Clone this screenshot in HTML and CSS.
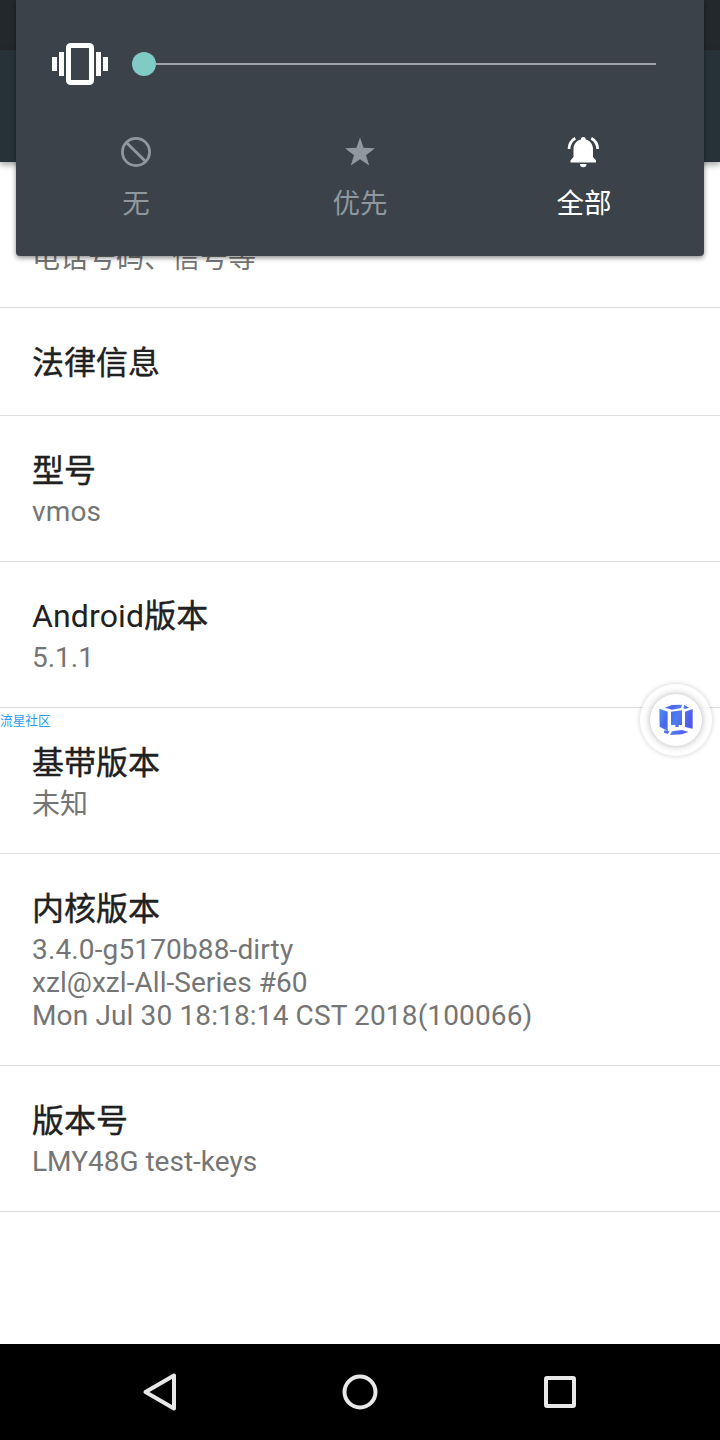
FILE: index.html
```
<!DOCTYPE html>
<html lang="zh-CN">
<head>
<meta charset="utf-8">
<title>关于手机</title>
<link rel="stylesheet" href="styles.css">
</head>
<body>
<div class="screen">
  <div class="status-bar"></div>
  <header class="app-bar"></header>
  <main class="list">
    <section class="item item-clipped"><p class="summary">电话号码、信号等</p></section>
    <section class="item item-single"><h2 class="title title-cjk">法律信息</h2></section>
    <section class="item"><h2 class="title title-cjk">型号</h2><p class="summary summary-wide">vmos</p></section>
    <section class="item"><h2 class="title"><span class="latin">Android</span>版本</h2><p class="summary">5.1.1</p></section>
    <section class="item"><h2 class="title title-cjk">基带版本</h2><p class="summary summary-cjk">未知</p></section>
    <section class="item"><h2 class="title title-cjk">内核版本</h2><p class="summary summary-wide">3.4.0-g5170b88-dirty<br><span class="tight">xzl@xzl-All-Series #60</span><br>Mon Jul 30 18:18:14 CST 2018(100066)</p></section>
    <section class="item"><h2 class="title title-cjk">版本号</h2><p class="summary">LMY48G test-keys</p></section>
  </main>
  <nav class="nav-bar">
    <svg class="nav-icon" viewBox="0 0 48 48"><path d="M9.5 24 38 7.5v33z"/></svg>
    <svg class="nav-icon" viewBox="0 0 48 48"><circle cx="24" cy="24" r="15.5"/></svg>
    <svg class="nav-icon" viewBox="0 0 48 48"><rect x="10" y="10" width="28" height="28" rx="1"/></svg>
  </nav>

  <div class="volume-panel">
    <div class="volume-row">
      <svg class="vibrate" viewBox="0 0 56 42"><path d="M0 14h5v14H0zM7 9h5v24H7zM44 9h5v24h-5zM51 14h5v14h-5z" fill="#fff"/><rect x="16.5" y="2.5" width="23" height="37" rx="2" fill="none" stroke="#fff" stroke-width="5"/></svg>
      <div class="slider"><span class="thumb"></span><span class="track"></span></div>
    </div>
    <div class="modes">
      <div class="mode">
        <svg class="mode-icon" viewBox="0 0 36 36" fill="none" stroke="currentColor" stroke-width="2.8"><circle cx="18" cy="18" r="13.6"/><path d="M8.4 8.4 27.6 27.6"/></svg>
        <span>无</span>
      </div>
      <div class="mode">
        <svg class="mode-icon" viewBox="0 0 36 36" fill="currentColor"><path d="m18 3.5 3.600 10.300L33 14.200l-9 7 3.200 10.300L18 25.200l-9.200 6.300L12 21.200l-9-7 11.400-.4z"/></svg>
        <span>优先</span>
      </div>
      <div class="mode mode-active">
        <svg class="mode-icon" viewBox="0 0 36 36" fill="currentColor"><path d="M17.300 3a2.400 2.400 0 0 1 2.400 2.500c4.500 1.100 7.300 4.800 7.300 9.500v8l3 3.500v2H4.500v-2l3-3.500v-8c0-4.700 2.900-8.400 7.400-9.500A2.400 2.400 0 0 1 17.300 3zM14 30h6.500a3.250 3.250 0 0 1-6.500 0z"/><path d="M9.300 4.300C5.300 6.500 3.200 10 3 15M25.300 4.300C29.300 6.500 31.500 10 31.700 15" fill="none" stroke="currentColor" stroke-width="2.700"/></svg>
        <span>全部</span>
      </div>
    </div>
  </div>

  <div class="watermark">流星社区</div>
  <div class="float-ball">
    <div class="float-core">
      <svg class="float-logo" viewBox="21 24 102 96">
        <defs><linearGradient id="blue" gradientUnits="userSpaceOnUse" x1="22" y1="50" x2="122" y2="90"><stop stop-color="#4a8df2"/><stop offset=".25" stop-color="#4a68ee"/><stop offset=".5" stop-color="#4f7cf0"/><stop offset="1" stop-color="#5154e8"/></linearGradient></defs>
        <g fill="url(#blue)"><path d="M38 35 60 27 90 26 87 36 60 41zM97 27 111 35 98 39 94 37zM22 38 47 47V105L23 92zM122 39 99 47V93L122 98zM57 47 90 43V87H80V93H70V87H57zM37 103 52 106 48 114 36 110z"/><path d="M60 106 90 102 109 108 90 115 54 117z"/></g>
      </svg>
    </div>
  </div>
</div>
</body>
</html>
```
FILE: styles.css
```
* { box-sizing: border-box; }
body { margin: 0; background: #fff; }
.screen {
  position: relative;
  display: flex;
  flex-direction: column;
  width: 720px;
  height: 1440px;
  overflow: hidden;
  font-family: Roboto, "Noto Sans CJK SC", sans-serif;
}
.status-bar { flex: none; height: 50px; background: #22282c; }
.app-bar {
  flex: none;
  height: 112px;
  background: #263238;
  box-shadow: 0 3px 6px rgba(0, 0, 0, .35);
}
.list { flex: 1; }
.item { padding: 35px 32px 33px; border-bottom: 1px solid #dedede; }
.item-clipped { padding: 80px 32px 32px; }
.item-single { padding-bottom: 34px; }
.title {
  margin: 0;
  height: 38px;
  font-size: 32px;
  line-height: 38px;
  font-weight: 400;
  color: #212121;
  -webkit-text-stroke: .4px #212121;
}
.title-cjk { line-height: 40px; }
.latin { letter-spacing: .15px; -webkit-text-stroke: 0; }
.summary {
  margin: 0;
  font-size: 28px;
  line-height: 33px;
  color: #757575;
}
.summary-wide { letter-spacing: .14px; }
.summary-cjk { height: 33px; line-height: 35px; }
.tight { letter-spacing: .05px; }
.title + .summary { margin-top: 6px; }

.nav-bar {
  flex: none;
  display: flex;
  justify-content: center;
  align-items: center;
  gap: 152px;
  height: 96px;
  background: #000;
}
.nav-icon {
  width: 48px;
  height: 48px;
  fill: none;
  stroke: #e8e8e8;
  stroke-width: 4;
  stroke-linejoin: round;
}

.volume-panel {
  position: absolute;
  top: 0;
  left: 16px;
  width: 688px;
  height: 256px;
  padding: 0 8px;
  border-radius: 0 0 4px 4px;
  background: #3b4249;
  box-shadow: 0 2px 5px rgba(0, 0, 0, .45);
}
.volume-row {
  display: flex;
  align-items: center;
  gap: 24px;
  height: 128px;
  padding: 0 40px 0 28px;
}
.vibrate { width: 56px; height: 42px; }
.slider { flex: 1; display: flex; align-items: center; }
.thumb { width: 24px; height: 24px; border-radius: 50%; background: #80cbc4; }
.track { flex: 1; height: 2px; background: #a0a5a9; }
.modes { display: grid; grid-template-columns: repeat(3, 1fr); }
.mode {
  display: flex;
  flex-direction: column;
  align-items: center;
  padding-top: 6px;
  color: #8f989e;
  font-size: 27.5px;
  line-height: 36px;
}
.mode-icon { width: 36px; height: 36px; margin-bottom: 16px; }
.mode-active { color: #fff; }

.watermark {
  position: absolute;
  top: 711px;
  left: 0;
  font-size: 12.7px;
  line-height: 19px;
  color: #2c9bea;
}
.float-ball {
  position: absolute;
  top: 684px;
  left: 640px;
  display: flex;
  align-items: center;
  justify-content: center;
  width: 72px;
  height: 72px;
  border-radius: 50%;
  background: rgba(255, 255, 255, .85);
  box-shadow: 0 0 5px rgba(0, 0, 0, .2);
}
.float-core {
  display: flex;
  align-items: center;
  justify-content: center;
  width: 52px;
  height: 52px;
  border-radius: 50%;
  background: #fff;
  box-shadow: 0 0 7px rgba(0, 0, 0, .3);
}
.float-logo { width: 34px; height: 32px; }
```
